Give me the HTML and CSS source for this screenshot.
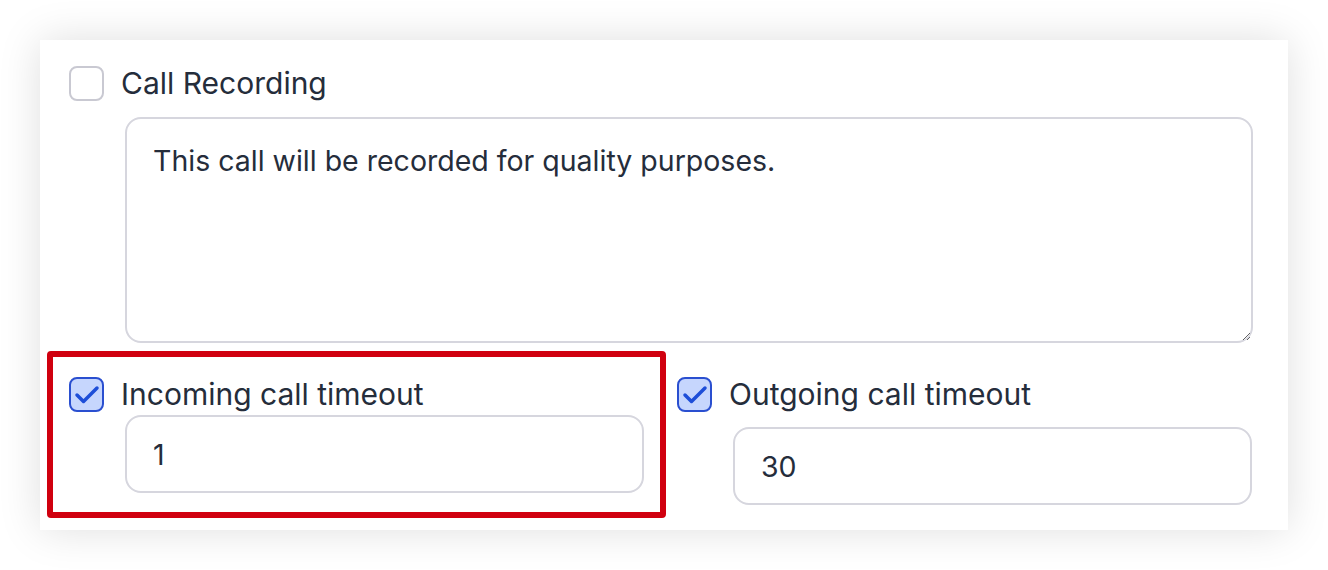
FILE: index.html
```html
<!DOCTYPE html>
<html>
    <head>
        <meta charset="UTF-8">
        <meta name="viewport" content="width=device-width, initial-scale=1.0">
        <title>Call settings</title>
        <link rel="stylesheet" href="styles.css">
    </head>

    <body>
        <div class="card">
            <label class="check-row">
                <span class="checkbox"></span>
                <span class="check-label">Call Recording</span>
            </label>
            <textarea class="message" readonly>This call will be recorded for quality purposes.</textarea>

            <div class="timeouts">
                <div class="timeout timeout-highlight">
                    <label class="check-row">
                        <span class="checkbox checked">
                            <svg viewBox="0 0 31 31" width="31" height="31"><path d="M6 16l6.5 6.5L26 9" fill="none" stroke="#1d4ed8" stroke-width="3.5" stroke-linecap="round" stroke-linejoin="round"/></svg>
                        </span>
                        <span class="check-label">Incoming call timeout</span>
                    </label>
                    <input class="field field-tight" type="text" value="1" readonly>
                </div>

                <div class="timeout">
                    <label class="check-row">
                        <span class="checkbox checked">
                            <svg viewBox="0 0 31 31" width="31" height="31"><path d="M6 16l6.5 6.5L26 9" fill="none" stroke="#1d4ed8" stroke-width="3.5" stroke-linecap="round" stroke-linejoin="round"/></svg>
                        </span>
                        <span class="check-label">Outgoing call timeout</span>
                    </label>
                    <input class="field" type="text" value="30" readonly>
                </div>
            </div>
        </div>
    </body>
</html>
```

FILE: styles.css
```css
body {
    font-family: 'Inter', 'Noto Sans', sans-serif;
    background: #ffffff;
    color: #252d3b;
    margin: 0;
    padding: 40px;
}
.card {
    width: 1248px;
    height: 490px;
    box-sizing: border-box;
    padding: 26px 35px 0 29px;
    background: #fff;
    box-shadow: 0px 0px 40px rgba(0, 0, 0, 0.13);
}
.check-row {
    display: flex;
    align-items: center;
    gap: 17px;
}
.checkbox {
    width: 35px;
    height: 35px;
    box-sizing: border-box;
    border: 2px solid #c9c9d2;
    border-radius: 8px;
    background: #fff;
    display: flex;
    align-items: center;
    justify-content: center;
    flex-shrink: 0;
}
.checkbox.checked {
    background: #c6d6fd;
    border-color: #2a4fd0;
}
.check-label {
    font-size: 30px;
    line-height: 35px;
}
.message {
    display: block;
    width: 1128px;
    height: 226px;
    box-sizing: border-box;
    margin: 16px 0 0 56px;
    padding: 23px 26px;
    border: 2px solid #d6d6de;
    border-radius: 16px;
    font-family: inherit;
    font-size: 28.5px;
    line-height: 38px;
    color: #252d3b;
    outline: none;
}
.timeouts {
    display: flex;
    gap: 11px;
    margin: 8px 0 0 -22px;
}
.timeout {
    flex: 1;
    padding-top: 26px;
}
.timeout-highlight {
    flex: none;
    width: 619px;
    height: 167px;
    box-sizing: border-box;
    padding: 20px 16px 0 16px;
    border: 6px solid #d0000f;
    border-radius: 4px;
}
.field {
    display: block;
    width: 519px;
    height: 78px;
    box-sizing: border-box;
    margin: 15px 0 0 56px;
    padding: 0 26px;
    border: 2px solid #d6d6de;
    border-radius: 16px;
    font-family: inherit;
    font-size: 28.5px;
    color: #252d3b;
    outline: none;
}
.field-tight {
    margin-top: 3px;
}
```
